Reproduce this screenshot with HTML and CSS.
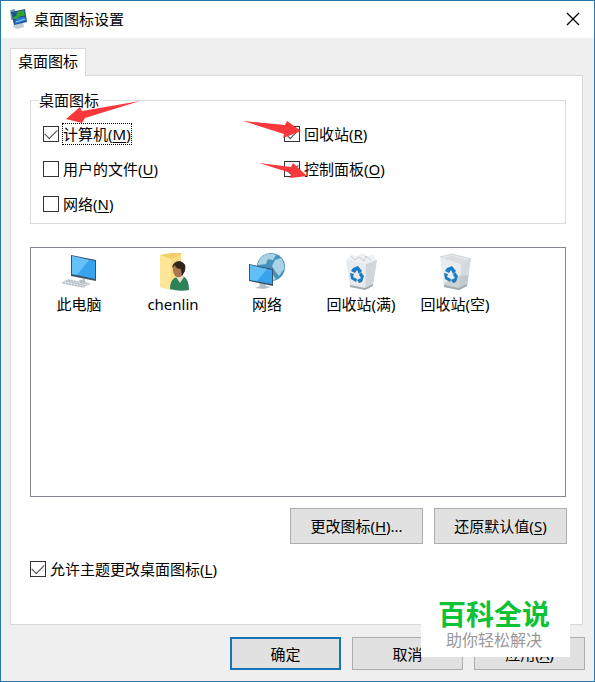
FILE: index.html
```html
<!DOCTYPE html>
<html lang="zh-CN">
<head>
  <meta charset="UTF-8">
  <meta name="viewport" content="width=device-width, initial-scale=1.0">
  <title>桌面图标设置</title>
  <link rel="stylesheet" href="styles.css">
</head>
<body>
  <div class="window">
    <header class="titlebar">
      <svg class="app-icon" viewBox="0 0 18 20">
        <path d="M5 15 L14 13 L15 18 L8 20 L4 18Z" fill="#c3ccd1"/>
        <path d="M1 1 L6 0 L7 10 L2 11Z" fill="#7da4bd"/>
        <path d="M2 3 L16 0 L18 13 L5 16Z" fill="#1e4f96"/>
        <path d="M3 4 L15 1 L16 7 Q11 6 9 10 L4 10Z" fill="#2da52e"/>
        <path d="M3 4 L8 3 L7 7 L4 8Z" fill="#1c4c9c"/>
        <path d="M6 11 Q11 7 16 8 L17 12 L6 15Z" fill="#2875cf"/>
        <path d="M7 13 L16 10" stroke="#9acbea" stroke-width="1"/>
      </svg>
      <h1 class="title">桌面图标设置</h1>
      <button class="close" type="button" aria-label="关闭">
        <svg viewBox="0 0 14 14"><path d="M1 1 L13 13 M13 1 L1 13" stroke="#000" stroke-width="1.3"/></svg>
      </button>
    </header>

    <main class="content">
      <div class="tabs" role="tablist">
        <button class="tab" type="button" role="tab" aria-selected="true">桌面图标</button>
      </div>

      <section class="panel">
        <fieldset class="group">
          <legend>桌面图标</legend>
          <div class="options">
            <label class="check"><input type="checkbox" checked><span class="focused">计算机(<u>M</u>)</span></label>
            <label class="check"><input type="checkbox" checked><span>回收站(<u>R</u>)</span></label>
            <label class="check"><input type="checkbox"><span>用户的文件(<u>U</u>)</span></label>
            <label class="check"><input type="checkbox" checked><span>控制面板(<u>O</u>)</span></label>
            <label class="check"><input type="checkbox"><span>网络(<u>N</u>)</span></label>
          </div>
        </fieldset>

        <ul class="icons">
          <li class="item">
            <svg viewBox="0 0 40 40">
              <path d="M20 28 L26 27 L26 30 L32 32 L24 35 L17 33 L21 31Z" fill="#b4bec5"/>
              <path d="M12 3 L37 8 L37 29 L12 24Z" fill="#3b5566"/>
              <path d="M13 4 L36 9 L36 27 L13 22Z" fill="#36a5ee"/>
              <path d="M13 4 L30 8 L18 23 L13 22Z" fill="#65c1f8"/>
              <path d="M6 28 L10 27 L30 32 L25 36 L1 31Z" fill="#dce1e5"/>
              <path d="M7 29 L27 34 M9 28 L28 32 M4 31 L24 35" stroke="#a3adb4" stroke-dasharray="2 1"/>
            </svg>
            <span>此电脑</span>
          </li>
          <li class="item">
            <svg viewBox="0 0 40 40">
              <path d="M7 3 L18 1 L28 1 L28 33 L18 37 L7 35Z" fill="#f3cf6b"/>
              <path d="M7 3 L18 7 L18 38 L7 35Z" fill="#ffe596"/>
              <path d="M18 7 L28 3 L28 33 L18 38Z" fill="#f9db85"/>
              <path d="M17 37 Q17 27 24 25 L30 24 Q36 27 36 38 Q26 40 17 37Z" fill="#2c8158"/>
              <path d="M23 25 L27 31 L31 25 L29 21 L24 21Z" fill="#e7dfcb"/>
              <path d="M20 13 Q22 9 28 11 L31 18 Q29 27 24 25 Q19 23 20 13Z" fill="#a9744f"/>
              <path d="M19 16 Q20 9 27 9 Q34 11 32 19 L29 24 L28 17 Q23 17 22 13 Z" fill="#30251f"/>
            </svg>
            <span>chenlin</span>
          </li>
          <li class="item">
            <svg viewBox="0 0 40 40">
              <circle cx="24" cy="15" r="14" fill="#4693bd"/>
              <path d="M16 4 Q23 0 29 3 L26 8 L21 7 L19 12 L11 13 Q11 8 16 4Z M28 8 L34 6 Q38 12 37 17 L32 24 L28 19 L25 14Z M21 21 L26 23 L29 27 L24 29Z" fill="#a9d2e5"/>
              <path d="M12 31 L18 31 L19 34 L24 35 L17 37 L8 36 L13 34Z" fill="#b4bec5"/>
              <path d="M2 12 L26 17 L26 34 L2 29Z" fill="#3b5566"/>
              <path d="M3 13 L25 18 L25 32 L3 28Z" fill="#35a4ed"/>
              <path d="M3 13 L20 17 L10 29 L3 28Z" fill="#61bff7"/>
            </svg>
            <span>网络</span>
          </li>
          <li class="item">
            <svg viewBox="0 0 40 40">
              <path d="M5 8 L10 3 L17 4 L21 1 L26 4 L32 3 L36 9 L28 13 L8 11Z" fill="#eef1f3"/>
              <path d="M10 4 L14 8 L18 5 L23 9 L25 4 L30 8" fill="none" stroke="#c6ced3"/>
              <path d="M5 8 L25 12 L24 38 L9 35Z" fill="#e8ebee"/>
              <path d="M25 12 L36 8 L32 34 L24 38Z" fill="#d0d5d9"/>
              <path d="M9 33 L24 36 L32 32 L32 34 L24 38 L9 35Z" fill="#a3abb0"/>
              <g fill="#197bc4"><path d="M12 16 L17 14 L21 19 L18 22 L16 18 L14 21 L10 19Z"/><path d="M9 21 L13 22 L12 25 L16 27 L15 30 L10 27Z"/><path d="M20 20 L23 24 L21 30 L18 31 L16 28 L20 26 L18 23Z"/></g>
            </svg>
            <span>回收站(满)</span>
          </li>
          <li class="item">
            <svg viewBox="0 0 40 40">
              <path d="M5 5 L17 2 L36 7 L26 12Z" fill="#e6e9eb" stroke="#ccd2d6"/>
              <path d="M8 6 L17 4 L33 8 L26 11Z" fill="#d8dde0"/>
              <path d="M5 5 L26 12 L24 38 L9 35Z" fill="#e9ecee"/>
              <path d="M26 12 L36 7 L32 34 L24 38Z" fill="#d5dadd"/>
              <path d="M9 31 L24 24 L34 23 L32 34 L24 38 L9 35Z" fill="#b1b8bc" opacity=".5"/>
              <path d="M9 33 L24 36 L32 32 L32 34 L24 38 L9 35Z" fill="#a3abb0"/>
              <g fill="#197bc4"><path d="M12 16 L17 14 L21 19 L18 22 L16 18 L14 21 L10 19Z"/><path d="M9 21 L13 22 L12 25 L16 27 L15 30 L10 27Z"/><path d="M20 20 L23 24 L21 30 L18 31 L16 28 L20 26 L18 23Z"/></g>
            </svg>
            <span>回收站(空)</span>
          </li>
        </ul>

        <div class="actions">
          <button class="btn wide" type="button">更改图标(<u>H</u>)...</button>
          <button class="btn wide" type="button">还原默认值(<u>S</u>)</button>
        </div>

        <label class="check"><input type="checkbox" checked><span>允许主题更改桌面图标(<u>L</u>)</span></label>
      </section>

      <footer class="footer">
        <button class="btn primary" type="button">确定</button>
        <button class="btn" type="button">取消</button>
        <button class="btn" type="button">应用(<u>A</u>)</button>
      </footer>
    </main>

    <!-- red pointers over the checkboxes -->
    <svg class="arrows" viewBox="0 0 320 200" aria-hidden="true">
      <path d="M66 119 L80 107 L82 111 L140 101 L85 118 L82 123Z"/>
      <path d="M243 121 L285 125 L287 121 L301 131 L283 138 L284 134Z"/>
      <path d="M259 163 L291 167 L293 163 L307 176 L290 178 L291 173Z"/>
    </svg>

    <div class="watermark">
      <strong>百科全说</strong>
      <span>助你轻松解决</span>
    </div>
  </div>
</body>
</html>
```
FILE: styles.css
```css
* {
  box-sizing: border-box;
  margin: 0;
  padding: 0;
}

body {
  font: 15px/20px "Noto Sans", "Noto Sans CJK SC", sans-serif;
  color: #000;
}

button {
  font: inherit;
  color: inherit;
}

u {
  text-underline-offset: 2px;
}

.window {
  position: relative;
  display: flex;
  flex-direction: column;
  min-height: 100vh;
  background-color: #efefef;
  border: 1px solid #2877ad;
}

.titlebar {
  display: flex;
  align-items: center;
  height: 37px;
  padding: 0 8px 1px;
  background-color: #fff;
}

.app-icon {
  width: 18px;
  height: 20px;
}

.title {
  flex: 1;
  margin-left: 7px;
  font-size: 15px;
  font-weight: 400;
}

.close {
  display: flex;
  align-items: center;
  justify-content: center;
  width: 26px;
  height: 26px;
  border: 0;
  background: none;
}

.close svg {
  width: 14px;
  height: 14px;
}

.content {
  display: flex;
  flex: 1;
  flex-direction: column;
  padding: 10px 11px 11px 9px;
}

.tabs {
  display: flex;
}

.tab {
  position: relative;
  z-index: 1;
  height: 28px;
  margin-bottom: -1px;
  padding: 0 7px 3px;
  border: 1px solid #d9d9d9;
  border-bottom: 0;
  background-color: #fff;
}

.panel {
  flex: 1;
  padding: 14px 16px 16px 19px;
  border: 1px solid #d9d9d9;
  background-color: #fff;
}

.group {
  padding: 0 0 2px 12px;
  border: 1px solid #dcdcdc;
}

.group legend {
  margin-left: -5px;
  padding: 0 1px;
}

.options {
  display: grid;
  grid-template-columns: 6fr 7fr;
  grid-auto-rows: 35px;
  align-items: center;
  padding-top: 6px;
}

.check {
  display: flex;
  align-items: center;
  gap: 4px;
}

.check input {
  appearance: none;
  display: grid;
  place-items: center;
  width: 16px;
  height: 16px;
  border: 1px solid #333;
  background-color: #fff;
}

.check input:checked::before {
  content: "";
  width: 11px;
  height: 6px;
  margin-bottom: 3px;
  border: solid #4a4a4a;
  border-width: 0 0 1px 1px;
  transform: rotate(-45deg);
}

.focused {
  outline: 1px dotted #000;
}

.icons {
  display: flex;
  flex-wrap: wrap;
  align-content: flex-start;
  height: 250px;
  margin-top: 23px;
  padding: 4px 1px;
  border: 1px solid #828790;
  list-style: none;
}

.item {
  display: flex;
  flex-direction: column;
  align-items: center;
  gap: 2px;
  width: 94px;
}

.item svg {
  width: 40px;
  height: 40px;
}

.actions {
  display: flex;
  justify-content: flex-end;
  gap: 11px;
  margin: 11px -1px 15px 0;
}

.btn {
  width: 111px;
  height: 33px;
  border: 1px solid #adadad;
  background-color: #e1e1e1;
}

.btn.wide {
  width: 133px;
  height: 36px;
}

.btn.primary {
  border: 2px solid #1874b8;
}

.footer {
  display: flex;
  justify-content: flex-end;
  gap: 11px;
  padding-top: 12px;
  margin-right: -2px;
}

.arrows {
  position: absolute;
  top: -1px;
  left: -1px;
  width: 320px;
  height: 200px;
  fill: #f9383c;
  pointer-events: none;
}

.watermark {
  position: absolute;
  right: 24px;
  bottom: 24px;
  display: flex;
  flex-direction: column;
  align-items: center;
  width: 149px;
  padding: 4px 3px 7px 0;
  background-color: #fff;
}

.watermark strong {
  font-size: 28px;
  line-height: 31px;
  font-weight: 700;
  color: #0dc235;
}

.watermark span {
  font-size: 16px;
  color: #999;
}
```
